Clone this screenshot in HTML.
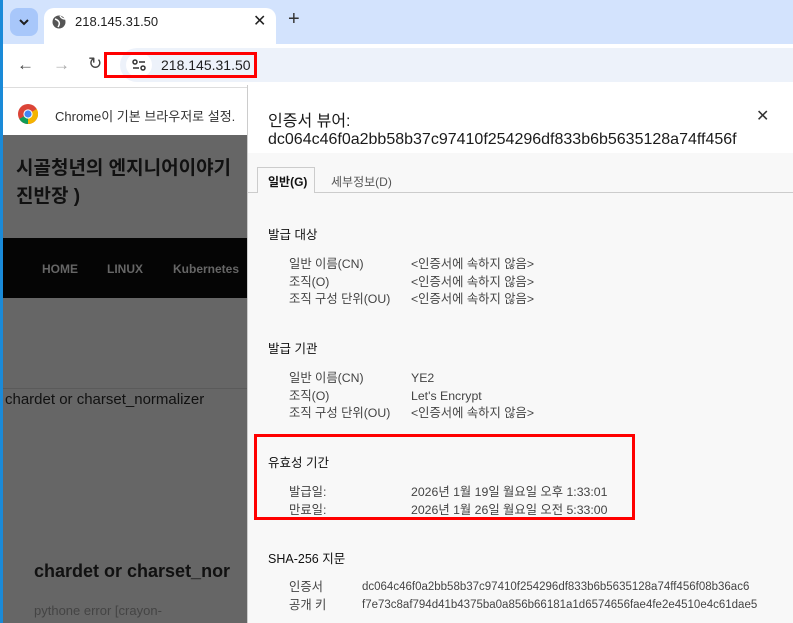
<!DOCTYPE html>
<html><head><meta charset="utf-8"><style>
*{margin:0;padding:0;box-sizing:border-box}
body{width:793px;height:623px;overflow:hidden;position:relative;background:#fff;font-family:"Liberation Sans","Noto Sans CJK KR",sans-serif}
.a{position:absolute;white-space:nowrap}
.d{font-size:12.3px;color:#444}
.h{font-size:12.5px;color:#111}
</style></head><body>
<div class="a" style="left:0;top:0;width:793px;height:44px;background:#d3e3fd"></div>
<div class="a" style="left:0;top:0;width:3px;height:623px;background:#1a8ad8"></div>
<div class="a" style="left:10px;top:8px;width:28px;height:28px;border-radius:8px;background:#a8c7fa"></div>
<svg class="a" style="left:18px;top:17px" width="12" height="10"><path d="M2 3l4 4 4-4" stroke="#1f1f1f" stroke-width="2" fill="none"/></svg>
<div class="a" style="left:44px;top:8px;width:232px;height:40px;background:#fff;border-radius:10px 10px 0 0"></div>
<svg class="a" style="left:52px;top:15px" width="14" height="14"><circle cx="7" cy="7" r="6.5" fill="#555"/><path d="M3 4q3 1 4 3t-1 5M8 1q2 3 5 3" stroke="#fff" stroke-width="1.5" fill="none"/></svg>
<div class="a" style="left:75px;top:14px;font-size:13px;color:#1f1f1f">218.145.31.50</div>
<div class="a" style="left:253px;top:11px;font-size:16px;color:#222">✕</div>
<div class="a" style="left:288px;top:8px;font-size:20px;color:#333">+</div>
<div class="a" style="left:3px;top:44px;width:790px;height:44px;background:#fff;border-bottom:1px solid #ddd"></div>
<div class="a" style="left:17px;top:55px;font-size:17px;color:#444">←</div>
<div class="a" style="left:53px;top:55px;font-size:17px;color:#aaa">→</div>
<div class="a" style="left:88px;top:54px;font-size:17px;color:#444">↻</div>
<div class="a" style="left:120px;top:48px;width:673px;height:34px;border-radius:17px 0 0 17px;background:#edf2fa"></div>
<div class="a" style="left:126px;top:53px;width:26px;height:24px;border-radius:12px;background:#fff"></div>
<svg class="a" style="left:132px;top:58px" width="14" height="14"><circle cx="3" cy="4" r="2" stroke="#333" stroke-width="1.5" fill="none"/><path d="M7 4h6M1 10h6" stroke="#333" stroke-width="1.5"/><circle cx="11" cy="10" r="2" stroke="#333" stroke-width="1.5" fill="none"/></svg>
<div class="a" style="left:161px;top:57px;font-size:14px;color:#1f1f1f">218.145.31.50</div>
<div class="a" style="left:104px;top:52px;width:153px;height:26px;border:3px solid #f00"></div>
<div class="a" style="left:3px;top:89px;width:244px;height:46px;background:#fff"></div>
<svg class="a" style="left:18px;top:104px" width="20" height="20" viewBox="0 0 20 20"><circle cx="10" cy="10" r="10" fill="#db4437"/><path d="M10 10L1.3 15A10 10 0 0 0 10 20z" fill="#0f9d58"/><path d="M10 10l8.7 -5A10 10 0 0 1 10 20z" fill="#f4b400"/><circle cx="10" cy="10" r="4.6" fill="#fff"/><circle cx="10" cy="10" r="3.6" fill="#4285f4"/></svg>
<div class="a" style="left:55px;top:106px;font-size:13px;color:#333">Chrome이 기본 브라우저로 설정.</div>
<div class="a" style="left:3px;top:135px;width:244px;height:488px;background:#666"></div>
<div class="a" style="left:16px;top:155px;font-size:19px;font-weight:bold;color:#111;line-height:28px">시골청년의 엔지니어이야기<br>진반장 )</div>
<div class="a" style="left:3px;top:238px;width:244px;height:60px;background:#050505"></div>
<div class="a" style="left:42px;top:262px;font-size:12px;font-weight:bold;color:#666">HOME</div>
<div class="a" style="left:107px;top:262px;font-size:12px;font-weight:bold;color:#666">LINUX</div>
<div class="a" style="left:173px;top:262px;font-size:12px;font-weight:bold;color:#666">Kubernetes</div>
<div class="a" style="left:3px;top:388px;width:244px;height:1px;background:#5a5a5a"></div>
<div class="a" style="left:5px;top:391px;font-size:15px;color:#111">chardet or charset_normalizer</div>
<div class="a" style="left:34px;top:561px;font-size:18px;font-weight:bold;color:#111">chardet or charset_nor</div>
<div class="a" style="left:34px;top:603px;font-size:13px;color:#444">pythone error [crayon-</div>
<div class="a" style="left:247px;top:85px;width:546px;height:538px;background:#f8f8f8;border-left:1px solid #ccc"></div>
<div class="a" style="left:248px;top:85px;width:545px;height:68px;background:#fff"></div>
<div class="a" style="left:268px;top:107px;font-size:16px;color:#1a1a1a">인증서 뷰어:</div>
<div class="a" style="left:268px;top:131px;font-size:16px;color:#1a1a1a">dc064c46f0a2bb58b37c97410f254296df833b6b5635128a74ff456f</div>
<div class="a" style="left:756px;top:106px;font-size:16px;color:#333">✕</div>
<div class="a" style="left:248px;top:192px;width:545px;height:1px;background:#ccc"></div>
<div class="a" style="left:257px;top:167px;width:58px;height:26px;border:1px solid #ccc;border-bottom:none;background:#f8f8f8"></div>
<div class="a" style="left:268px;top:173px;font-size:12px;font-weight:bold;color:#111">일반(G)</div>
<div class="a" style="left:331px;top:173px;font-size:12px;color:#555">세부정보(D)</div>

<div class="a h" style="left:268px;top:224px">발급 대상</div>
<div class="a d" style="left:289px;top:256px;line-height:17.5px">일반 이름(CN)<br>조직(O)<br>조직 구성 단위(OU)</div>
<div class="a d" style="left:411px;top:256px;line-height:17.5px">&lt;인증서에 속하지 않음&gt;<br>&lt;인증서에 속하지 않음&gt;<br>&lt;인증서에 속하지 않음&gt;</div>

<div class="a h" style="left:268px;top:338px">발급 기관</div>
<div class="a d" style="left:289px;top:370px;line-height:17.5px">일반 이름(CN)<br>조직(O)<br>조직 구성 단위(OU)</div>
<div class="a d" style="left:411px;top:370px;line-height:17.5px">YE2<br>Let's Encrypt<br>&lt;인증서에 속하지 않음&gt;</div>

<div class="a" style="left:254px;top:434px;width:381px;height:86px;border:3px solid #f00"></div>
<div class="a h" style="left:268px;top:452px">유효성 기간</div>
<div class="a d" style="left:289px;top:484px;line-height:17.5px">발급일:<br>만료일:</div>
<div class="a d" style="left:411px;top:484px;line-height:17.5px">2026년 1월 19일 월요일 오후 1:33:01<br>2026년 1월 26일 월요일 오전 5:33:00</div>

<div class="a h" style="left:268px;top:548px">SHA-256 지문</div>
<div class="a d" style="left:289px;top:579px;line-height:17.5px">인증서<br>공개 키</div>
<div class="a d" style="left:362px;top:579px;line-height:17.5px;font-size:11.5px">dc064c46f0a2bb58b37c97410f254296df833b6b5635128a74ff456f08b36ac6<br>f7e73c8af794d41b4375ba0a856b66181a1d6574656fae4fe2e4510e4c61dae5</div>
</body></html>
